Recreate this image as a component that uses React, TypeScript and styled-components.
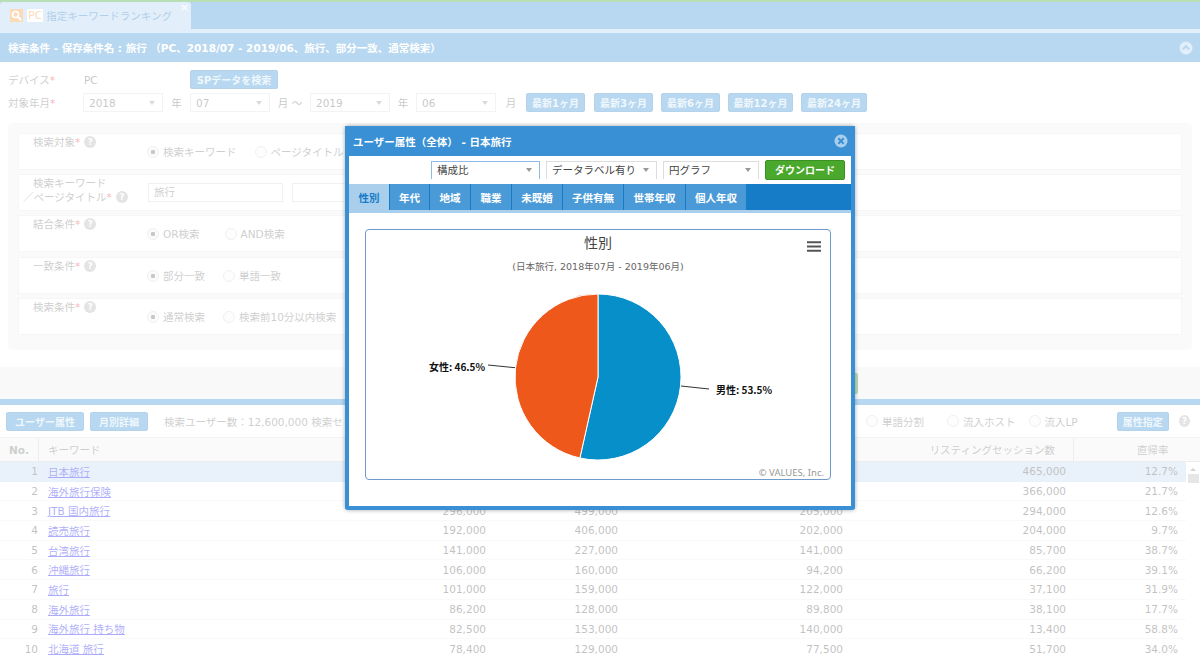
import React from "react";
import styled, {createGlobalStyle} from "styled-components";

const GlobalStyle = createGlobalStyle`
  html, body {
    margin: 0;
    padding: 0;
    background: #fff;
  }

  body {
    width: 1200px;
    height: 657px;
    overflow: hidden;
    font-family: "DejaVu Sans", "Noto Sans CJK JP", sans-serif;
    font-size: 10.5px;
    color: #444;
  }

  * {
    box-sizing: border-box;
  }
`;

const Page = styled.div`
  width: 1200px;
  height: 657px;
  overflow: hidden;
  position: relative;
`;

const Backdrop = styled.div`
  position: absolute;
  inset: 0;
  background: rgba(255, 255, 255, 0.64);
`;

const TopStripe = styled.div`
  height: 2px;
  background: #3da932;
`;

const TabStrip = styled.div`
  height: 27px;
  background: #3a90d4;
  display: flex;
`;

const PageTab = styled.div`
  width: 191px;
  background: #aed0f1;
  border-radius: 3px 3px 0 0;
  display: flex;
  align-items: center;
  padding-left: 10px;
  position: relative;
`;

const SearchBadge = styled.span`
  width: 13px;
  height: 13px;
  background: #f39a3c;
  display: flex;
  align-items: center;
  justify-content: center;
`;

const PcBadge = styled.span`
  background: #fff;
  color: #f39a3c;
  margin-left: 4px;
  padding: 0 1px;
  font-size: 11px;
  line-height: 13px;
`;

const PageTabTitle = styled.span`
  color: #1f7cc4;
  margin-left: 3px;
  white-space: nowrap;
`;

const PageTabClose = styled.span`
  position: absolute;
  right: 2px;
  top: -1px;
  color: #fff;
  font-size: 11px;
`;

const TabUnderline = styled.div`
  height: 4px;
  background: #aed0f1;
`;

const PanelHeader = styled.div`
  height: 29px;
  background: #3a90d4;
  color: #fff;
  font-weight: bold;
  display: flex;
  align-items: center;
  justify-content: space-between;
  padding: 0 7px 0 8px;
  white-space: nowrap;
`;

const FormTop = styled.div`
  padding-top: 8px;
  height: 61px;
`;

const FormLine = styled.div<{ $top?: number }>`
  display: flex;
  align-items: center;
  height: 19px;
  padding-left: 8px;
  margin-top: ${props => props.$top || 0}px;
`;

const FieldName = styled.span<{ $width: number }>`
  width: ${props => props.$width}px;
  flex: none;
  color: #777;
`;

const Required = styled.span`
  color: #e33;
`;

const PlainValue = styled.span`
  width: 106px;
  flex: none;
  color: #666;
`;

const Button = styled.button<{ $width: number, $gap?: number }>`
  width: ${props => props.$width}px;
  height: 19px;
  flex: none;
  margin: 0 0 0 ${props => props.$gap || 0}px;
  padding: 0;
  border: 1px solid #2f82c6;
  border-radius: 2px;
  background: #3a90d4;
  color: #d6e8f7;
  font-family: inherit;
  font-size: 10px;
  font-weight: bold;
  white-space: nowrap;
`;

const Select = styled.div<{ $width: number, $active?: boolean, $open?: boolean }>`
  width: ${props => props.$width}px;
  height: ${props => props.$open ? 18 : 19}px;
  flex: none;
  display: flex;
  align-items: center;
  justify-content: space-between;
  padding: 0 7px ${props => props.$open ? 2 : 0}px 5px;
  background: #fff;
  border: 1px solid ${props => props.$active ? "#8fbbe4" : "#ddd"};
  border-bottom: ${props => props.$open ? "none" : undefined};
  white-space: nowrap;
  color: ${props => props.$open ? "#444" : "#666"};

  &::after {
    content: "";
    border-left: 3.5px solid transparent;
    border-right: 3.5px solid transparent;
    border-top: 4px solid #999;
  }
`;

const Unit = styled.span<{ $width: number }>`
  width: ${props => props.$width}px;
  flex: none;
  text-align: center;
  color: #666;
  white-space: nowrap;
`;

const ConditionPanel = styled.div`
  margin: 0 8px;
  height: 227px;
  padding: 10px 10px 0;
  background: #f1f1f1;
  border-radius: 4px;
  display: flex;
  flex-direction: column;
  gap: 4px;
`;

const ConditionRow = styled.div<{ $top?: number }>`
  height: 37px;
  margin-top: ${props => props.$top || 0}px;
  background: #fff;
  border: 1px solid #e6e6e6;
  display: grid;
  grid-template-columns: 128px 1fr;
  align-items: center;
  overflow: hidden;
`;

const ConditionLabel = styled.div`
  align-self: start;
  padding: 1px 0 0 14px;
  line-height: 14px;
  color: #777;
  white-space: nowrap;
`;

const ShiftedLine = styled.div`
  margin-left: -10px;
`;

const Help = styled.span<{ $gap?: number }>`
  display: inline-block;
  width: 12px;
  height: 12px;
  margin-left: ${props => props.$gap ?? 4}px;
  border-radius: 50%;
  background: #b4b4b4;
  color: #fff;
  font-size: 8.5px;
  font-weight: bold;
  line-height: 12px;
  text-align: center;
  vertical-align: 1px;
`;

const Options = styled.div`
  display: flex;
  align-items: center;
  white-space: nowrap;
`;

const RadioOption = styled.label<{ $gap?: number }>`
  display: flex;
  align-items: center;
  gap: 4px;
  margin-left: ${props => props.$gap || 0}px;
  color: #777;
  white-space: nowrap;
`;

const RadioMark = styled.span<{ $on?: boolean }>`
  width: 12px;
  height: 12px;
  flex: none;
  border-radius: 50%;
  border: 1px solid #d4d4d4;
  background: ${props => props.$on
    ? "radial-gradient(circle, #666 0 2px, #f4f4f4 2.5px)"
    : "#f8f8f8"};
`;

const TextInput = styled.div<{ $gap?: number }>`
  width: 135px;
  height: 19px;
  flex: none;
  margin-left: ${props => props.$gap || 0}px;
  padding-left: 5px;
  line-height: 17px;
  border: 1px solid #d8d8d8;
  color: #777;
`;

const SubmitBand = styled.div`
  margin-top: 17px;
  height: 32px;
  background: #eee;
  display: flex;
  align-items: center;
  justify-content: flex-end;
  padding-right: 342px;
`;

const GreenButton = styled.button<{ $width: number, $height: number, $shift?: number }>`
  width: ${props => props.$width}px;
  height: ${props => props.$height}px;
  flex: none;
  margin-top: ${props => props.$shift || 0}px;
  padding: 0 0 1px;
  border: 1px solid #3c9124;
  border-radius: 2px;
  background: #4aa82c;
  color: #fff;
  font-family: inherit;
  font-size: 10px;
  font-weight: bold;
`;

const ResultBar = styled.div`
  height: 6px;
  background: #3a90d4;
`;

const ResultTools = styled.div`
  height: 33px;
  display: flex;
  align-items: center;
  padding: 0 10px 0 6px;
  border-bottom: 1px solid #ddd;
  white-space: nowrap;
  overflow: hidden;
`;

const ResultStats = styled.span`
  margin-left: 16px;
  width: 705px;
  flex: none;
  color: #777;
`;

const HeaderRow = styled.div`
  height: 24px;
  display: grid;
  grid-template-columns: 39px 321px 126px 132px 225px 231px 126px;
  align-items: stretch;
  background: #f1f1f1;
  border-bottom: 1px solid #ccc;
  font-weight: bold;
  color: #777;
`;

const HeaderCell = styled.div<{ $align?: string, $line?: boolean, $pad?: number }>`
  display: flex;
  align-items: center;
  justify-content: ${props => props.$align || "flex-start"};
  padding: 0 ${props => props.$pad || 0}px;
  border-right: ${props => props.$line ? "1px solid #ccc" : "none"};
  font-weight: ${props => props.$align === "center" ? "bold" : "normal"};
  white-space: nowrap;
`;

const TableArea = styled.div`
  display: flex;
`;

const TableRows = styled.div`
  width: 1186px;
  flex: none;
`;

const DataRow = styled.div<{ $active?: boolean }>`
  height: 19.7px;
  display: grid;
  grid-template-columns: 38px 322px 126px 132px 225px 223px 112px 8px;
  align-items: center;
  background: ${props => props.$active ? "#c2dbf4" : "#fff"};
  border-bottom: 1px solid ${props => props.$active ? "#c2dbf4" : "#eee"};
  white-space: nowrap;
  color: #555;
`;

const NumCell = styled.div`
  text-align: right;
`;

const KeywordCell = styled.div`
  padding-left: 10px;
`;

const KeywordLink = styled.a`
  color: #1a1aee;
  text-decoration: underline;
`;

const ScrollTrack = styled.div`
  width: 14px;
  flex: none;
  display: flex;
  flex-direction: column;
  align-items: center;
  padding-top: 6px;
  gap: 3px;
`;

const ScrollArrow = styled.span`
  border-left: 3px solid transparent;
  border-right: 3px solid transparent;
  border-bottom: 3px solid #888;
`;

const ScrollThumb = styled.span`
  width: 11px;
  height: 9px;
  background: #bbb;
`;

const Modal = styled.div`
  position: absolute;
  left: 345px;
  top: 126px;
  width: 510px;
  height: 384px;
  border: 4px solid #3a90d4;
  border-top: none;
  border-radius: 3px;
  background: #fff;
  box-shadow: 0 0 4px rgba(0, 0, 0, 0.35);
  display: flex;
  flex-direction: column;
`;

const ModalHeader = styled.div`
  height: 30px;
  flex: none;
  margin: 0 -4px;
  padding: 0 7px 0 8px;
  background: #3a90d4;
  color: #fff;
  font-weight: bold;
  display: flex;
  align-items: center;
  justify-content: space-between;
`;

const ModalTools = styled.div`
  height: 28px;
  flex: none;
  display: flex;
  justify-content: flex-end;
  align-items: flex-start;
  gap: 6px;
  padding: 5px 6px 0 0;
`;

const ModalTabs = styled.div`
  height: 29px;
  flex: none;
  background: #167cc8;
  border-bottom: 3px solid #a9cfec;
  display: flex;
  gap: 1px;
`;

const ModalTab = styled.div<{ $width: number, $active?: boolean }>`
  width: ${props => props.$width}px;
  flex: none;
  display: flex;
  align-items: center;
  justify-content: center;
  font-weight: bold;
  white-space: nowrap;
  color: ${props => props.$active ? "#167cc8" : "#fff"};
  background: ${props => props.$active ? "#a9cfec" : "#4b9ad8"};
`;

const ChartBox = styled.div`
  position: relative;
  margin: 16px 20px 0 16px;
  height: 251px;
  border: 1px solid #6f9bcc;
  border-radius: 4px;
  text-align: center;
`;

const ChartTitle = styled.div`
  margin-top: 4px;
  height: 18px;
  font-size: 14px;
  line-height: 18px;
  color: #444;
`;

const ChartSubtitle = styled.div`
  margin-top: 8px;
  height: 14px;
  font-size: 9.5px;
  line-height: 14px;
  color: #666;
`;

const ChartMenu = styled.svg`
  position: absolute;
  top: 11px;
  right: 9px;
`;

const ChartPlot = styled.svg`
  display: block;
  margin-top: 4px;
`;

const PieLabel = styled.text`
  font-family: "Noto Sans CJK JP", sans-serif;
  font-size: 10px;
  font-weight: bold;
  fill: #111;
`;

const ChartCredit = styled.div`
  position: absolute;
  right: 6px;
  bottom: 0;
  font-family: "Noto Sans", sans-serif;
  font-size: 9.5px;
  line-height: 13px;
  color: #999;
`;

const CircleIcon: React.FC<{ kind: "up" | "close", fill: string, stroke: string }> = ({kind, fill, stroke}) => (
    <svg width="14" height="14" viewBox="0 0 14 14">
        <circle cx="7" cy="7" r="6.5" fill={fill}/>
        {kind === "up"
            ? <path d="M3.8 8.4 7 5.2l3.2 3.2" fill="none" stroke={stroke} strokeWidth="2"/>
            : <path d="M4.3 4.3l5.4 5.4M9.7 4.3l-5.4 5.4" fill="none" stroke={stroke} strokeWidth="2"/>}
    </svg>
);

interface KeywordRow {
    keyword: string,
    values: string[]
}

const rows: KeywordRow[] = [
    {keyword: "日本旅行", values: ["298,000", "512,000", "208,000", "465,000", "12.7%"]},
    {keyword: "海外旅行保険", values: ["297,000", "505,000", "206,000", "366,000", "21.7%"]},
    {keyword: "JTB 国内旅行", values: ["296,000", "499,000", "205,000", "294,000", "12.6%"]},
    {keyword: "読売旅行", values: ["192,000", "406,000", "202,000", "204,000", "9.7%"]},
    {keyword: "台湾旅行", values: ["141,000", "227,000", "141,000", "85,700", "38.7%"]},
    {keyword: "沖縄旅行", values: ["106,000", "160,000", "94,200", "66,200", "39.1%"]},
    {keyword: "旅行", values: ["101,000", "159,000", "122,000", "37,100", "31.9%"]},
    {keyword: "海外旅行", values: ["86,200", "128,000", "89,800", "38,100", "17.7%"]},
    {keyword: "海外旅行 持ち物", values: ["82,500", "153,000", "140,000", "13,400", "58.8%"]},
    {keyword: "北海道 旅行", values: ["78,400", "129,000", "77,500", "51,700", "34.0%"]},
];

const tabs = [
    {label: "性別", width: 40},
    {label: "年代", width: 39},
    {label: "地域", width: 40},
    {label: "職業", width: 40},
    {label: "未既婚", width: 50},
    {label: "子供有無", width: 60},
    {label: "世帯年収", width: 61},
    {label: "個人年収", width: 60},
];

const latest = [
    {label: "最新1ヶ月", width: 59, gap: 0},
    {label: "最新3ヶ月", width: 59, gap: 9},
    {label: "最新6ヶ月", width: 59, gap: 8},
    {label: "最新12ヶ月", width: 65, gap: 8},
    {label: "最新24ヶ月", width: 66, gap: 8},
];

const App: React.FC = () => {
    return (
        <Page>
            <GlobalStyle/>
            <TopStripe/>
            <TabStrip>
                <PageTab>
                    <SearchBadge>
                        <svg width="11" height="11" viewBox="0 0 11 11">
                            <circle cx="4.5" cy="4.5" r="3" fill="none" stroke="#fff" strokeWidth="1.6"/>
                            <path d="M6.8 6.8 10 10" stroke="#fff" strokeWidth="2"/>
                        </svg>
                    </SearchBadge>
                    <PcBadge>PC</PcBadge>
                    <PageTabTitle>指定キーワードランキング</PageTabTitle>
                    <PageTabClose>×</PageTabClose>
                </PageTab>
            </TabStrip>
            <TabUnderline/>
            <PanelHeader>
                <span>検索条件 - 保存条件名 : 旅行 （PC、2018/07 - 2019/06、旅行、部分一致、通常検索）</span>
                <CircleIcon kind="up" fill="#aed0f1" stroke="#3a90d4"/>
            </PanelHeader>
            <FormTop>
                <FormLine>
                    <FieldName $width={76}>デバイス<Required>*</Required></FieldName>
                    <PlainValue>PC</PlainValue>
                    <Button $width={88}>SPデータを検索</Button>
                </FormLine>
                <FormLine $top={4}>
                    <FieldName $width={75}>対象年月<Required>*</Required></FieldName>
                    <Select $width={80}>2018</Select>
                    <Unit $width={27}>年</Unit>
                    <Select $width={80}>07</Select>
                    <Unit $width={40}>月 〜</Unit>
                    <Select $width={80}>2019</Select>
                    <Unit $width={26}>年</Unit>
                    <Select $width={80}>06</Select>
                    <Unit $width={30}>月</Unit>
                    {latest.map(item => (
                        <Button key={item.label} $width={item.width} $gap={item.gap}>{item.label}</Button>
                    ))}
                </FormLine>
            </FormTop>
            <ConditionPanel>
                <ConditionRow>
                    <ConditionLabel>検索対象<Required>*</Required><Help>?</Help></ConditionLabel>
                    <Options>
                        <RadioOption><RadioMark $on/>検索キーワード</RadioOption>
                        <RadioOption $gap={18}><RadioMark/>ページタイトル</RadioOption>
                    </Options>
                </ConditionRow>
                <ConditionRow>
                    <ConditionLabel>
                        検索キーワード
                        <ShiftedLine>／ページタイトル<Required>*</Required><Help>?</Help></ShiftedLine>
                    </ConditionLabel>
                    <Options>
                        <TextInput $gap={1}>旅行</TextInput>
                        <TextInput $gap={9}/>
                    </Options>
                </ConditionRow>
                <ConditionRow>
                    <ConditionLabel>結合条件<Required>*</Required><Help>?</Help></ConditionLabel>
                    <Options>
                        <RadioOption><RadioMark $on/>OR検索</RadioOption>
                        <RadioOption $gap={25}><RadioMark/>AND検索</RadioOption>
                    </Options>
                </ConditionRow>
                <ConditionRow $top={1}>
                    <ConditionLabel>一致条件<Required>*</Required><Help>?</Help></ConditionLabel>
                    <Options>
                        <RadioOption><RadioMark $on/>部分一致</RadioOption>
                        <RadioOption $gap={18}><RadioMark/>単語一致</RadioOption>
                    </Options>
                </ConditionRow>
                <ConditionRow>
                    <ConditionLabel>検索条件<Required>*</Required><Help>?</Help></ConditionLabel>
                    <Options>
                        <RadioOption><RadioMark $on/>通常検索</RadioOption>
                        <RadioOption $gap={18}><RadioMark/>検索前10分以内検索</RadioOption>
                    </Options>
                </ConditionRow>
            </ConditionPanel>
            <SubmitBand>
                <GreenButton $width={80} $height={21}>検索</GreenButton>
            </SubmitBand>
            <ResultBar/>
            <ResultTools>
                <Button $width={78}>ユーザー属性</Button>
                <Button $width={58} $gap={6}>月別詳細</Button>
                <ResultStats>検索ユーザー数：12,600,000 検索セッション数：18,900,000</ResultStats>
                <RadioOption $gap={-3}><RadioMark/>単語分割</RadioOption>
                <RadioOption $gap={23}><RadioMark/>流入ホスト</RadioOption>
                <RadioOption $gap={13}><RadioMark/>流入LP</RadioOption>
                <Button $width={52} $gap={39}>属性指定</Button>
                <Help $gap={10}>?</Help>
            </ResultTools>
            <HeaderRow>
                <HeaderCell $align="center" $line>No.</HeaderCell>
                <HeaderCell $pad={9}>キーワード</HeaderCell>
                <HeaderCell $align="flex-end"/>
                <HeaderCell $align="flex-end"/>
                <HeaderCell $align="flex-end"/>
                <HeaderCell $align="flex-end" $pad={18} $line>リスティングセッション数</HeaderCell>
                <HeaderCell $pad={63}>直帰率</HeaderCell>
            </HeaderRow>
            <TableArea>
                <TableRows>
                    {rows.map((row, i) => (
                        <DataRow key={row.keyword} $active={i === 0}>
                            <NumCell>{i + 1}</NumCell>
                            <KeywordCell><KeywordLink>{row.keyword}</KeywordLink></KeywordCell>
                            {row.values.map((value, j) => <NumCell key={j}>{value}</NumCell>)}
                            <span/>
                        </DataRow>
                    ))}
                </TableRows>
                <ScrollTrack>
                    <ScrollArrow/>
                    <ScrollThumb/>
                </ScrollTrack>
            </TableArea>
            <Backdrop/>
            <Modal>
                <ModalHeader>
                    <span>ユーザー属性（全体） - 日本旅行</span>
                    <CircleIcon kind="close" fill="#a9cfec" stroke="#3a90d4"/>
                </ModalHeader>
                <ModalTools>
                    <Select $width={109} $active $open>構成比</Select>
                    <Select $width={111} $open>データラベル有り</Select>
                    <Select $width={96} $open>円グラフ</Select>
                    <GreenButton $width={80} $height={20} $shift={-1}>ダウンロード</GreenButton>
                </ModalTools>
                <ModalTabs>
                    {tabs.map((tab, i) => (
                        <ModalTab key={tab.label} $width={tab.width} $active={i === 0}>{tab.label}</ModalTab>
                    ))}
                </ModalTabs>
                <ChartBox>
                    <ChartTitle>性別</ChartTitle>
                    <ChartSubtitle>(日本旅行, 2018年07月 - 2019年06月)</ChartSubtitle>
                    <ChartMenu width="14" height="11" viewBox="0 0 14 11">
                        <path d="M0 1.25h14M0 5.5h14M0 9.75h14" stroke="#555" strokeWidth="2"/>
                    </ChartMenu>
                    <ChartPlot width="464" height="201" viewBox="366 278 464 201">
                        <path d="M598 377V294A83 83 0 1 1 579.9 458Z" fill="#068fc9" stroke="#fff"/>
                        <path d="M598 377L579.9 458A83 83 0 0 1 598 294Z" fill="#ee581b" stroke="#fff"/>
                        <path d="M488 365 515 367.7" stroke="#333" fill="none"/>
                        <path d="M681 386 709 389" stroke="#333" fill="none"/>
                        <PieLabel x="429" y="370.5">女性: 46.5%</PieLabel>
                        <PieLabel x="716" y="393.5">男性: 53.5%</PieLabel>
                    </ChartPlot>
                    <ChartCredit>© VALUES, Inc.</ChartCredit>
                </ChartBox>
            </Modal>
        </Page>
    );
};

export default App;
